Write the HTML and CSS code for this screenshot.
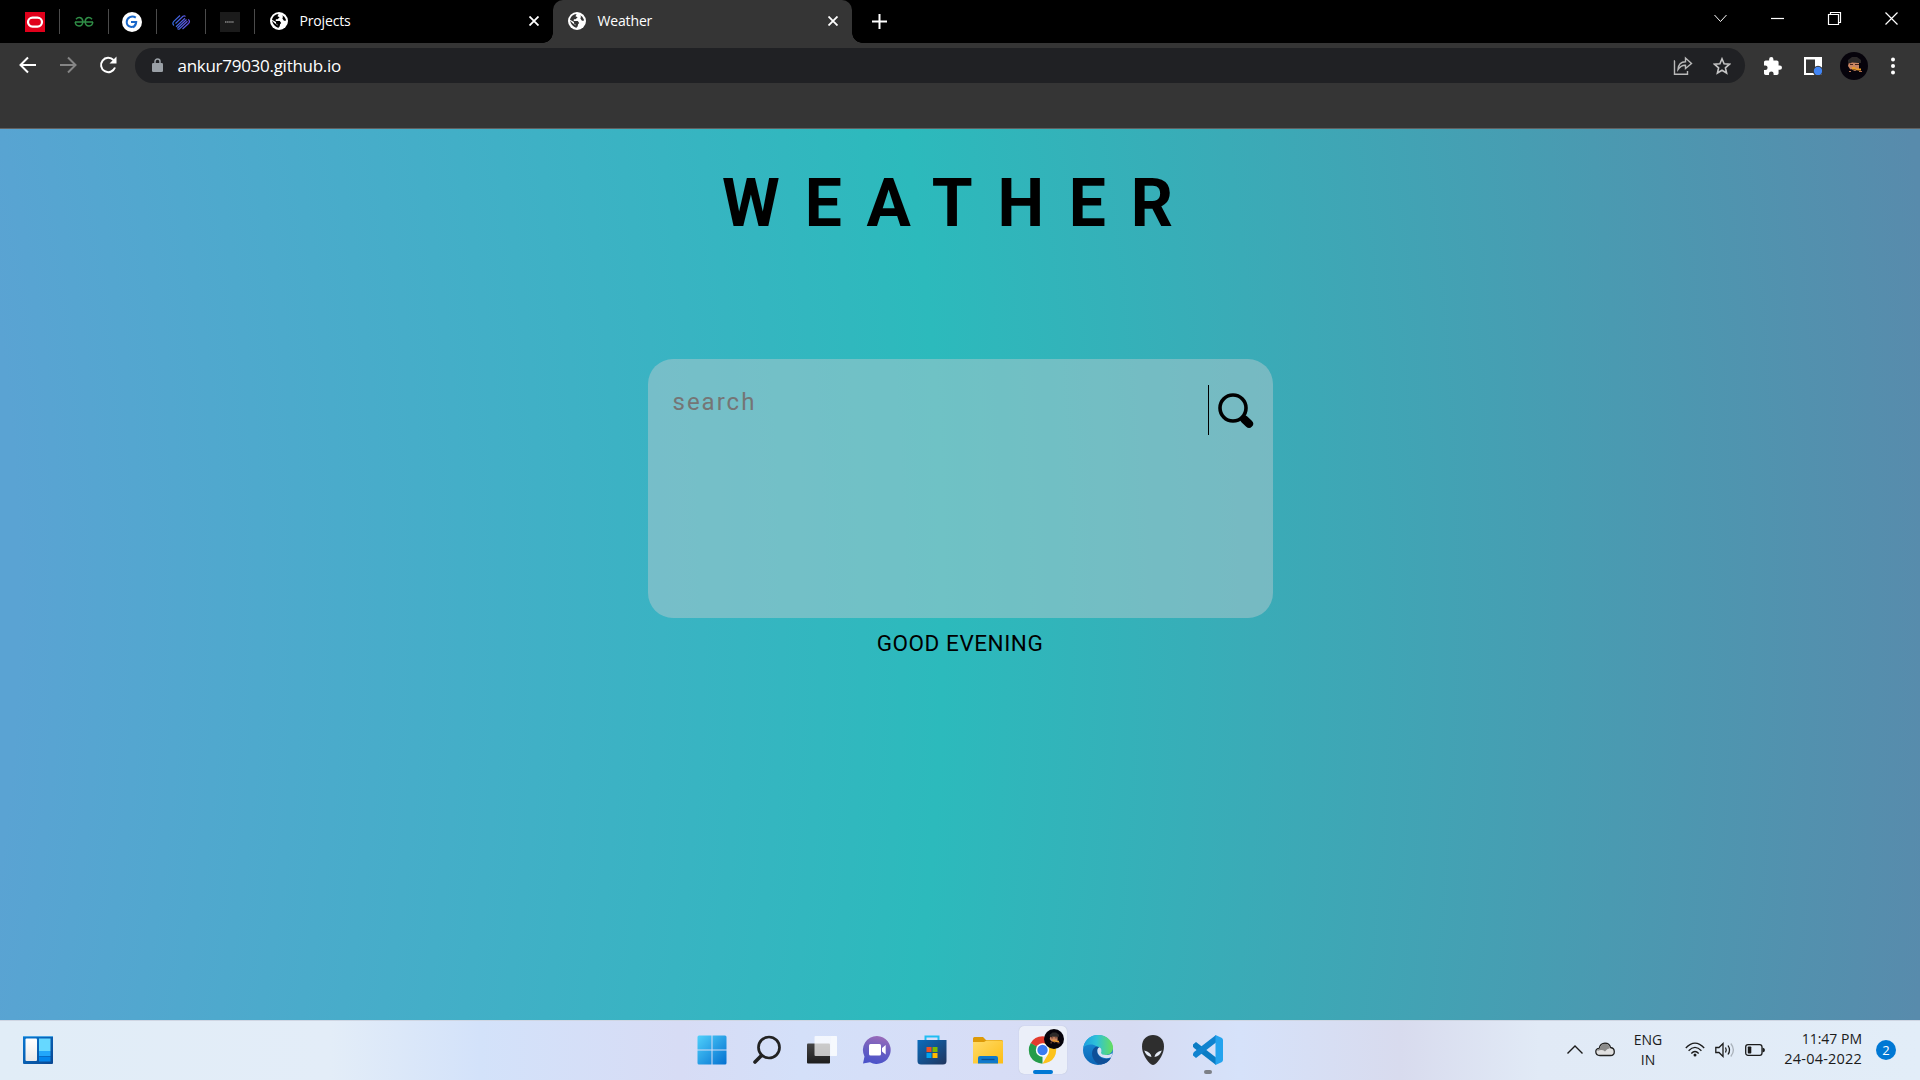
FILE: index.html
```html
<!DOCTYPE html>
<html lang="en">
<head>
<meta charset="utf-8">
<title>Weather</title>
<link rel="stylesheet" href="styles.css">
</head>
<body>
<svg width="0" height="0" class="defs" aria-hidden="true">
  <defs>
    <linearGradient id="win" x1="0" y1="0" x2="1" y2="1"><stop offset="0" stop-color="#4fd0fb"/><stop offset="1" stop-color="#0470d0"/></linearGradient>
    <linearGradient id="panel" x1="0" y1="0" x2="0" y2="1"><stop offset="0" stop-color="#fff"/><stop offset="1" stop-color="#e9e9ea"/></linearGradient>
    <linearGradient id="widget" x1="0" y1="0" x2="1" y2="1"><stop offset="0" stop-color="#0877d2"/><stop offset="1" stop-color="#0a4791"/></linearGradient>
    <linearGradient id="dark" x1="0" y1="0" x2="0" y2="1"><stop offset="0" stop-color="#444"/><stop offset="1" stop-color="#1d1d1d"/></linearGradient>
    <linearGradient id="chat" x1=".7" y1="0" x2=".5" y2="1"><stop offset="0" stop-color="#9c6bb8"/><stop offset=".5" stop-color="#6a5fc2"/><stop offset="1" stop-color="#4b53c9"/></linearGradient>
    <linearGradient id="store" x1="0" y1="0" x2="1" y2="1"><stop offset="0" stop-color="#0a6cbc"/><stop offset="1" stop-color="#20355e"/></linearGradient>
    <linearGradient id="folder" x1="0" y1="0" x2="1" y2="1"><stop offset="0" stop-color="#ffdb69"/><stop offset="1" stop-color="#fdbd14"/></linearGradient>
    <linearGradient id="edgeTop" x1="0" y1="0" x2="1" y2="0"><stop offset="0" stop-color="#1d9fe0"/><stop offset=".45" stop-color="#2fc2d8"/><stop offset="1" stop-color="#66df5c"/></linearGradient>
    <linearGradient id="edgeLow" x1="0" y1="0" x2="0" y2="1"><stop offset="0" stop-color="#1c93dc"/><stop offset="1" stop-color="#0b64b5"/></linearGradient>
    <linearGradient id="pin" gradientUnits="userSpaceOnUse" x1="0" y1="0" x2="20" y2="0"><stop offset="0" stop-color="#2f6fe0"/><stop offset="1" stop-color="#6a4ce0"/></linearGradient>
    <symbol id="globe" viewBox="0 0 18 18">
      <circle cx="9" cy="9" r="9" fill="#fff"/>
      <path d="M8.600 1.900 7.500 4.200 9.600 5.200 7.600 7.200 5.900 7.300 5.700 8.900 9.800 9.100 11.200 10.900 10.100 12.300 9.600 14.400 8.200 15.700 7.900 13 6 11.500 6 10 2 7.800C2.500 4.700 5 2.100 8.600 1.900ZM12.200 3.200 14.300 4.700 15.900 7.600 15.500 8.900 13.700 8.400 12.300 6.300 13 4.900Z" fill="currentColor"/>
      <path d="M2 8.500Q3 14 8.500 16L8 13.500 4.500 11Z" fill="currentColor"/>
    </symbol>
    <symbol id="avatar" viewBox="0 0 28 28">
      <circle cx="14" cy="14" r="14" fill="#06030b"/>
      <path d="M9 10h10v7l-4 2-5-2-2-3Z" fill="#c98563"/>
      <path d="M8 8 12 5h5l4 3v3h-3l-6-.5-2 1-2-1Z" fill="#2c2929"/>
      <path d="M10 12h3v1h-3ZM15 12h4v1h-4ZM10 17h7v1h-7Z" fill="#46241d"/>
      <path d="M12 15h3l1 1.500h5v2h-3l-3-1h-3Z" fill="#e99a28"/>
      <path d="M9 19h2v1H9ZM19 19h3v1h-3Z" fill="#b9714f"/>
    </symbol>
  </defs>
</svg>

<header class="tabstrip">
  <div class="pinned"><svg width="20" height="20"><rect width="20" height="20" fill="#e0001b"/><rect x="3" y="5.600" width="14" height="9" rx="4.500" fill="none" stroke="#fff" stroke-width="2.200"/></svg></div>
  <div class="pinned"><svg width="20" height="20" fill="none" stroke="#2f8d46" stroke-width="1.500"><path d="M1 10H19M2 7.200Q4 5 6.500 5.800 9 7 8.800 10 8.500 14 5 14 1.600 13.800 1.200 10M18 7.200Q16 5 13.500 5.800 11 7 11.200 10 11.500 14 15 14 18.400 13.800 18.800 10"/></svg></div>
  <div class="pinned"><svg width="20" height="20"><circle cx="10" cy="10" r="10" fill="#fff"/><path d="M13.800 5.600C10 2.900 4.700 5.400 4.700 10.100c0 5.400 7.200 6.500 8.800 1.900M9 10H14.200Q14 14 11 15.300" fill="none" stroke="#1967c9" stroke-width="2"/></svg></div>
  <div class="pinned"><svg width="20" height="20" fill="none" stroke="url(#pin)" stroke-width="1.200"><path d="M9 3.500 2.800 9.300Q.8 11.500 3 13.500M4.500 11.500 12 4.300Q13.500 3.200 14.500 4.500M5 14.800 14 6.300M6.500 16 15.500 7.500M8.500 16.800Q7.500 17.800 6.500 16.500M8.500 16.800 16.500 9.300M11.500 17 17.500 11.500Q19.500 9.500 17.300 7.300"/></svg></div>
  <div class="pinned"><svg width="20" height="20"><rect width="20" height="20" fill="#1b1b1b"/><path d="M5 10H14" stroke="#888" stroke-width="1.500" stroke-dasharray="1.500 .6"/></svg></div>
  <div class="tab">
    <svg class="tab-icon on-black" width="18" height="18"><use href="#globe"/></svg>
    <span class="tab-title">Projects</span>
    <svg class="tab-close" width="10" height="10"><path d="M.5.500 9.500 9.500M9.500.500.500 9.500"/></svg>
  </div>
  <div class="tab active">
    <svg class="tab-icon on-gray" width="18" height="18"><use href="#globe"/></svg>
    <span class="tab-title">Weather</span>
    <svg class="tab-close" width="10" height="10"><path d="M.5.500 9.500 9.500M9.500.500.500 9.500"/></svg>
  </div>
  <svg class="new-tab" width="15" height="15"><path d="M7.500 0V15M0 7.500H15" stroke="#fff" stroke-width="2"/></svg>
  <div class="window-controls">
    <svg width="57" height="36"><path d="M22.500 15 28.500 21.500 34.500 15" stroke-width="1"/></svg>
    <svg width="57" height="36"><path d="M22 18.500H35"/></svg>
    <svg width="57" height="36"><path d="M22.500 14.500H32.500V24.500H22.500ZM24.500 14.500V12.500H34.500V22.500H32.500"/></svg>
    <svg width="57" height="36"><path d="M22.500 12.500 34.500 24.500M34.500 12.500 22.500 24.500"/></svg>
  </div>
</header>

<nav class="toolbar">
  <div class="nav-buttons">
    <svg width="40" height="20" fill="none" stroke="#fff" stroke-width="2"><path d="M28 10H13M20 2.500 12.500 10 20 17.500"/></svg>
    <svg width="40" height="20" fill="none" stroke="#858585" stroke-width="2"><path d="M12 10H27M20 2.500 27.500 10 20 17.500"/></svg>
    <svg width="40" height="20" fill="none" stroke="#fff" stroke-width="2"><path d="M27 12.500A7.200 7.200 0 1 1 25.500 5"/><path d="M28.500 1.500V8.500H21.500Z" fill="#fff" stroke="none"/></svg>
  </div>
  <div class="omnibox">
    <svg width="11" height="15"><path d="M3 6V3.500a2.500 2.500 0 0 1 5 0V6" fill="none" stroke="#9aa0a6" stroke-width="1.500"/><rect y="5" width="11" height="9" rx="1.300" fill="#9aa0a6"/></svg>
    <span class="url">ankur79030.github.io</span>
    <svg class="share" width="20" height="20" fill="none" stroke="#b9b9b9" stroke-width="1.400"><path d="M2 5H1.500V18.300H14.500V15M5 13.500Q5.500 6 12.500 5.800V2L18.500 7.500 12.500 12.500V9.300Q8 9 5 13.500Z"/></svg>
    <svg class="star" width="18" height="18" fill="none" stroke="#c4c4c4" stroke-width="1.600"><path d="M9 1.800 11.100 6.700 16.500 7.200 12.400 10.800 13.600 16 9 13.200 4.400 16 5.600 10.800 1.500 7.200 6.900 6.700Z"/></svg>
  </div>
  <div class="extensions">
    <svg width="18" height="18" viewBox="2 1 21 21" fill="#fff"><path d="M20.500 11H19V7c0-1.100-.9-2-2-2h-4V3.500a2.500 2.500 0 0 0-5 0V5H4c-1.100 0-2 .9-2 2v3.800h1.500a2.700 2.700 0 0 1 0 5.400H2V20c0 1.100.9 2 2 2h3.800v-1.500a2.700 2.700 0 0 1 5.400 0V22H17c1.100 0 2-.9 2-2v-4h1.500a2.500 2.500 0 0 0 0-5z"/></svg>
    <svg width="18" height="18"><path d="M0 0H18V18H0ZM2 2.500V16H11V2.500Z" fill="#fff" fill-rule="evenodd"/><circle cx="14" cy="14" r="5.200" fill="#353535"/><circle cx="14" cy="14" r="4.200" fill="#4285f4"/></svg>
    <svg width="28" height="28"><use href="#avatar"/></svg>
    <svg width="4" height="18" fill="#fff"><circle cx="2" cy="2.500" r="2"/><circle cx="2" cy="9" r="2"/><circle cx="2" cy="15.500" r="2"/></svg>
  </div>
</nav>

<main class="page">
  <h1 class="title">WEATHER</h1>
  <section class="card">
    <span class="placeholder">search</span>
    <div class="search-button">
      <svg width="36" height="36"><circle cx="15" cy="15" r="13" fill="none" stroke="#000" stroke-width="3.600"/><path d="M24 24 25 25" stroke="#000" stroke-width="5"/><path d="M26.500 26.500 31 30.700" stroke="#000" stroke-width="8.200" stroke-linecap="round"/></svg>
    </div>
  </section>
  <p class="greeting">GOOD EVENING</p>
</main>

<footer class="taskbar">
  <div class="widgets">
    <svg width="30" height="28"><rect width="30" height="28" rx="1" fill="url(#widget)"/><path d="M0 .5H30" stroke="#4ba5e4"/><rect x="2.500" y="2.500" width="11.500" height="22.500" rx="1" fill="url(#panel)"/><rect x="16" y="2.500" width="11.500" height="12.500" fill="#66d8ff"/><rect x="16" y="15" width="11.500" height="5" fill="#22a7fb"/><rect x="16" y="20.500" width="11.500" height="5" fill="#0486ec"/></svg>
  </div>
  <div class="apps">
    <div class="app"><svg width="30" height="30"><path d="M2 .5H14.500V14.500H.5V2Q.5.500 2 .5ZM15.500.500H28Q29.500.500 29.500 2V14.500H15.500ZM.5 15.500H14.500V29.500H2Q.5 29.500.5 28ZM15.500 15.500H29.500V28Q29.500 29.500 28 29.500H15.500Z" fill="url(#win)"/></svg></div>
    <div class="app"><svg width="30" height="30" fill="none" stroke="#222" stroke-linecap="round"><circle cx="17" cy="12.500" r="10.500" stroke-width="2.700"/><path d="M9.500 20.500 3 27" stroke-width="3.600"/></svg></div>
    <div class="app"><svg width="30" height="30"><rect x="0" y="8.500" width="23" height="20" rx="1" fill="url(#dark)"/><rect x="7.500" y="1" width="22.500" height="20" rx="1" fill="#fff" opacity=".72"/><path d="M24 1H30V21H24Z" fill="#fff" opacity=".3"/></svg></div>
    <div class="app"><svg width="30" height="30"><path d="M15 1A14 14 0 1 1 8 27.300L1 28.500 2.500 21.500A14 14 0 0 1 15 1Z" fill="url(#chat)"/><rect x="7" y="9" width="12" height="11.500" rx="1.500" fill="#fff"/><path d="M20 13 23.700 10V19.500L20 16.500Z" fill="#fff"/></svg></div>
    <div class="app"><svg width="30" height="30"><path d="M8.500 6V1.500H21.500V6" fill="none" stroke="#20bdf3" stroke-width="2"/><path d="M.5 5H29.500V26Q29.500 29.500 26 29.500H4Q.5 29.500.5 26Z" fill="url(#store)"/><path d="M9.500 12H14.500V17H9.500Z" fill="#f25022"/><path d="M15.500 12H20.500V17H15.500Z" fill="#7fba00"/><path d="M9.500 18H14.500V23H9.500Z" fill="#00a4ef"/><path d="M15.500 18H20.500V23H15.500Z" fill="#ffb900"/></svg></div>
    <div class="app"><svg width="30" height="30"><path d="M0 3.500Q0 2 1.500 2H10L13 5H28.500Q30 5 30 6.500V12H0Z" fill="#dd9a08"/><path d="M0 7H11L13.500 5.500H28.500Q30 5.500 30 7V28.500H0Z" fill="url(#folder)"/><path d="M5 28.500V23Q5 21 7 21H23Q25 21 25 23V28.500Z" fill="#1079cb"/><path d="M8.500 24.500H21.500" stroke="#0d4f91" stroke-width="1.300"/></svg></div>
    <div class="app current"><svg width="48" height="48" viewBox="0 0 48 48"><path d="M23.500 24 11.600 17.200A13.700 13.700 0 0 1 35.400 17.200Z" fill="#e33b2e"/><path d="M23.500 24V37.700A13.700 13.700 0 0 1 11.600 17.200Z" fill="#259c49"/><path d="M23.500 17.200H35.400A13.700 13.700 0 0 1 23.500 37.700L29.500 27.500Z" fill="#fcc31c"/><path d="M11.600 17.200 17.500 27.500 23.500 24Z" fill="#259c49"/><circle cx="23.500" cy="24" r="6.700" fill="#fff"/><circle cx="23.500" cy="24" r="5.200" fill="#3a7cf0"/><svg x="25" y="3" width="20" height="20"><use href="#avatar"/></svg></svg></div>
    <div class="app"><svg width="30" height="30"><circle cx="15" cy="15" r="15" fill="url(#edgeLow)"/><path d="M.3 12.500C2 4 8.500 0 15 0 24 0 30 6.500 30 12.500 30 17.500 26.500 20 22 20 18.500 20 17.200 18.500 18 17 19.500 14 17 11.500 13.500 11.500 10 8.500 3.500 9 .3 12.500Z" fill="url(#edgeTop)"/><path d="M13.500 11.500C5 15 10 29 18 29.600 22.500 29 26 26.500 28 23 22 26 15.500 22.500 14.500 18 14 15 14.500 13.500 16.500 12.500Z" fill="#0e4f98"/><path d="M16.500 12.300C14 13 14 16.500 15 18.800 17 22.500 22 24.500 28.300 22.300L29.500 18C27 20.500 18.500 21 18 17.800 19 16 18.500 13 16.500 12.300Z" fill="#d9e0f4"/></svg></div>
    <div class="app"><svg width="30" height="30"><path d="M15 0C21 0 26 4 26 11.500 26 19 21 26 17 29.300Q15 30.500 13 29.300C9 26 4 19 4 11.500 4 4 9 0 15 0Z" fill="#2e2e2e"/><path d="M6.200 15.500Q13 17 13.500 22 8 21 6.200 15.500ZM23.800 15.500Q17 17 16.500 22 22 21 23.800 15.500Z" fill="#e4eaf5"/></svg></div>
    <div class="app running"><svg width="30" height="30"><path d="M0 9.500 3 7 23 22.500V30L1 13Q-.5 11 0 9.500Z" fill="#0b7cc4"/><path d="M0 20.500 3 23 23 7.500V0L1 17Q-.5 19 0 20.500Z" fill="#1183cf"/><path d="M22.500 0 28.500 2.700Q30 3.400 30 5V25Q30 26.600 28.500 27.300L22.500 30Z" fill="#24a3ee"/></svg></div>
  </div>
  <div class="tray">
    <svg class="expand" width="16" height="20" fill="none" stroke="#1b1b1b" stroke-width="1.400"><path d="M.5 13.500 8 6 15.500 13.500"/></svg>
    <svg class="cloud" width="20" height="20"><path d="M5 15.500Q.8 15.300.8 11.700.8 8.500 4.200 8.300 5.200 3.500 10 3.200 14.500 3.200 15.500 7.500 19.300 8 19.300 11.700 19.300 15.500 15.500 15.500Z" fill="#e0e0e0" stroke="#222" stroke-width="1.300"/><path d="M2.500 9.500Q4 9 4.800 8.200 6 3.800 10 3.800 14.300 4 14.800 8.200 12 8.500 10 11.500 7 9 2.500 11Z" fill="#8b8b8b"/></svg>
    <div class="language"><span>ENG</span><span>IN</span></div>
    <svg class="wifi" width="20" height="20" fill="none" stroke="#1b1b1b" stroke-width="1.300"><path d="M.8 8Q10-1.800 19.200 8M3.600 10.800Q10 4 16.400 10.800M6.300 13.500Q10 9.500 13.700 13.500"/><circle cx="10" cy="15" r="1.500" fill="#1b1b1b" stroke="none"/></svg>
    <svg class="volume" width="20" height="20" fill="none" stroke="#1b1b1b" stroke-width="1.300"><path d="M.8 7.500H4L8 3.500V16.500L4 12.500H.8ZM10.500 7.500Q12 10 10.500 12.500M13 5.500Q16 10 13 14.500"/><path d="M15.800 3.500Q21 10 15.800 16.500" stroke="#aab2bb"/></svg>
    <svg class="battery" width="20" height="20"><rect x=".7" y="4.700" width="16.300" height="10.600" rx="2.300" fill="none" stroke="#1b1b1b" stroke-width="1.300"/><rect x="2.800" y="6.500" width="3.500" height="7" rx=".8" fill="#1b1b1b"/><path d="M17.500 7.500Q20 8 20 10 20 12 17.500 12.500Z" fill="#1b1b1b"/></svg>
    <div class="clock"><span>11:47 PM</span><span class="date">24-04-2022</span></div>
    <div class="notifications">2</div>
  </div>
</footer>
</body>
</html>
```
FILE: styles.css
```css
* { box-sizing: border-box; }

body {
  margin: 0;
  width: 1920px;
  height: 1080px;
  overflow: hidden;
  display: flex;
  flex-direction: column;
  font-family: "Open Sans", "Noto Sans", sans-serif;
}

svg { display: block; flex: none; }
.defs { position: absolute; }

/* Tab strip */
.tabstrip {
  height: 43px;
  flex: none;
  display: flex;
  align-items: center;
  background: #000;
  padding-left: 11px;
}
.pinned {
  width: 48.800px;
  height: 25px;
  display: flex;
  align-items: center;
  justify-content: center;
  border-right: 1px solid #4b4b4b;
}
.tab {
  width: 298px;
  height: 43px;
  display: flex;
  align-items: center;
  padding: 0 14px 1px 15.500px;
  color: #fff;
  font-size: 14px;
}
.tab-title { flex: 1; margin: -2px 0 0 11px; letter-spacing: -.15px; white-space: nowrap; }
.tab-close { stroke: #fff; stroke-width: 1.800; }
.on-black { color: #000; }
.on-gray { color: #353535; }
.tab.active {
  position: relative;
  width: 299px;
  background: #353535;
  border-radius: 10px 10px 0 0;
}
.tab.active::before,
.tab.active::after {
  content: "";
  position: absolute;
  bottom: 0;
  width: 10px;
  height: 10px;
}
.tab.active::before { left: -10px; background: radial-gradient(circle at 0 0, transparent 9.500px, #353535 10px); }
.tab.active::after { right: -10px; background: radial-gradient(circle at 100% 0, transparent 9.500px, #353535 10px); }
.new-tab { margin-left: 20.500px; }
.window-controls { margin-left: auto; display: flex; height: 43px; }
.window-controls svg { fill: none; stroke: #fff; stroke-width: 1.200; }

/* Toolbar */
.toolbar {
  height: 86px;
  flex: none;
  display: flex;
  align-items: flex-start;
  padding: 5px 25px 0 7px;
  background: #353535;
  border-bottom: 1px solid #616161;
}
.nav-buttons { display: flex; width: 128px; height: 35px; align-items: center; padding: 0 0 1px .5px; }
.omnibox {
  width: 1610px;
  height: 35px;
  display: flex;
  align-items: center;
  padding: 0 14px 0 17px;
  border-radius: 18px;
  background: #202124;
  color: #fff;
}
.url { flex: 1; margin-left: 14.500px; font-size: 17px; letter-spacing: -.28px; }
.star { margin-left: 20px; }
.extensions { display: flex; align-items: center; height: 35px; margin-left: auto; gap: 22px; }
.extensions svg:nth-child(3) { margin: 0 -4px; }
.extensions svg:nth-child(4) { margin-left: 5px; }

/* Weather page */
.page {
  height: 891px;
  flex: none;
  display: flex;
  flex-direction: column;
  align-items: center;
  background: radial-gradient(circle 3790px at -1850px 471px, #5aa3d3 49.300%, #2cbabc 73.700%, #588bac 100%);
  font-family: Roboto, sans-serif;
  color: #000;
}
.title {
  margin: 35px 0 0;
  height: 80px;
  line-height: 80px;
  font-size: 66px;
  font-weight: 700;
  letter-spacing: 24.800px;
}
.card {
  display: flex;
  justify-content: space-between;
  width: 625px;
  height: 259px;
  margin-top: 115px;
  padding: 26px 19px 0 25px;
  border-radius: 25px;
  background: rgba(193, 203, 208, .45);
}
.placeholder { height: 34px; line-height: 34px; font-size: 24px; letter-spacing: 2px; color: #757575; }
.search-button { height: 50px; padding: 8px 0 0 9px; border-left: 1px solid #000; }
.greeting { margin: 11px 0 0; line-height: 28px; font-size: 22.500px; letter-spacing: .55px; }

/* Taskbar */
.taskbar {
  height: 60px;
  flex: none;
  display: grid;
  grid-template-columns: 1fr auto 1fr;
  align-items: center;
  padding: 0 24px 1px 23px;
  border-top: 1px solid #cfd6e3;
  background: linear-gradient(90deg, #e1edf7 0, #e3edf8 330px, #d3e2fa 480px, #d7dcf5 680px, #d4e0f9 800px, #d7ddf6 1000px, #d6dbf2 1130px, #d6e2fa 1240px, #d8dbee 1400px, #e1eaf6 1540px, #e2edf8 100%);
}
.apps { display: flex; gap: 7.200px; padding-left: 1px; }
.app {
  position: relative;
  width: 48px;
  height: 48px;
  display: flex;
  align-items: center;
  justify-content: center;
}
.app.current { background: #ebeff9; border-radius: 5px; box-shadow: 0 0 1px #a9b3c8; }
.app.current::after,
.app.running::after {
  content: "";
  position: absolute;
  bottom: 0;
  width: 20px;
  height: 4px;
  border-radius: 2px;
  background: #0078d4;
}
.app.running::after { width: 8px; background: #7c8087; }
.tray { display: flex; align-items: center; justify-content: flex-end; color: #1b1b1b; font-size: 14px; line-height: 20px; }
.cloud { margin-left: 12px; }
.language { display: flex; flex-direction: column; align-items: center; width: 40px; margin: -1px 0 0 13px; }
.wifi { margin-left: 17px; }
.volume, .battery { margin-left: 10px; }
.clock { display: flex; flex-direction: column; align-items: flex-end; width: 90px; margin: -2px 0 0 7px; }
.date { font-size: 14.500px; letter-spacing: .2px; }
.notifications {
  width: 20px;
  height: 20px;
  margin-left: 14px;
  border-radius: 50%;
  background: #0078d4;
  color: #fff;
  font-size: 13px;
  text-align: center;
}
```
